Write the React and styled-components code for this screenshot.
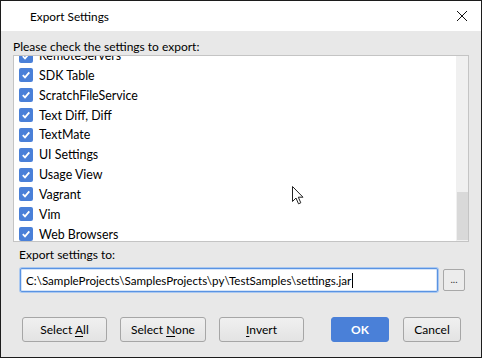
import React from 'react';
import styled, { createGlobalStyle } from 'styled-components';

const GlobalStyle = createGlobalStyle`
  html, body {
    margin: 0;
    padding: 0;
    background: #ffffff;
  }
  body {
    font-family: Lato, "Noto Sans", sans-serif;
    font-size: 12px;
    color: #000;
  }
`;

const Window = styled.div`
  position: relative;
  box-sizing: border-box;
  width: 482px;
  height: 358px;
  border: 1px solid #1c1c1c;
  display: flex;
  flex-direction: column;
  overflow: hidden;
`;

const TitleBar = styled.div`
  height: 30px;
  background: #ffffff;
  display: flex;
  align-items: center;
  justify-content: space-between;
  padding: 0 13px 0 29px;
`;

const Title = styled.span`
  font-size: 11.8px;
  color: #000;
`;

const CloseButton = styled.div`
  width: 12px;
  height: 12px;
  display: flex;
  align-items: center;
  justify-content: center;
`;

const Body = styled.div`
  flex: 1;
  background: #e8e8e8;
  display: flex;
  flex-direction: column;
  padding: 8px 12px 0 12px;
`;

const Label = styled.div`
  height: 16px;
  line-height: 16px;
  font-size: 12px;
`;

const ListBox = styled.div`
  box-sizing: border-box;
  width: 456px;
  height: 187px;
  border: 1px solid #c4c4c4;
  background: #ffffff;
  display: flex;
`;

const ListViewport = styled.div`
  flex: 1;
  overflow: hidden;
`;

const ListInner = styled.div`
  margin-top: -10.4px;
  padding-left: 5px;
`;

const Row = styled.div`
  height: 19.85px;
  display: flex;
  align-items: center;
  gap: 6px;
  font-size: 12.4px;
`;

const CheckBox = styled.span`
  width: 14px;
  height: 14px;
  border-radius: 2px;
  background: #4a80d8;
  display: flex;
  align-items: center;
  justify-content: center;
  flex-shrink: 0;
`;

const ScrollTrack = styled.div`
  width: 12px;
  background: #f0f0f0;
  display: flex;
  flex-direction: column;
  justify-content: flex-end;
  padding: 0 0 1px 1px;
  box-sizing: border-box;
`;

const ScrollThumb = styled.div`
  height: 48px;
  background: #d9d9d9;
`;

const ExportSection = styled.div`
  padding-left: 6px;
  margin-top: 5px;
  display: flex;
  flex-direction: column;
  gap: 5px;
`;

const PathRow = styled.div`
  display: flex;
  align-items: center;
  gap: 5px;
  margin-left: 1px;
`;

const PathField = styled.div`
  box-sizing: border-box;
  width: 418px;
  height: 24px;
  border: 1px solid #5a93e2;
  box-shadow: 0 0 0 1px #aac8f0, inset 0 0 0 1px #d5e4f8;
  border-radius: 2px;
  background: #ffffff;
  display: flex;
  align-items: center;
  padding-left: 5px;
  white-space: nowrap;
  font-size: 11.6px;
`;

const Caret = styled.span`
  display: inline-block;
  width: 1px;
  height: 15px;
  margin-left: 1px;
  background: #000;
`;

const BrowseButton = styled.div`
  box-sizing: border-box;
  width: 22px;
  height: 22px;
  border: 1px solid #a8a8a8;
  border-radius: 2px;
  background: #ececec;
  font-size: 10px;
  display: flex;
  align-items: center;
  justify-content: center;
  color: #333;
  padding-bottom: 3px;
`;

const ButtonBar = styled.div`
  margin: 25px -12px 0 -12px;
  padding: 0 20px 0 21px;
  display: flex;
  justify-content: space-between;
`;

const ButtonGroup = styled.div`
  display: flex;
  gap: ${p => p.gap}px;
`;

const Button = styled.div`
  box-sizing: border-box;
  width: ${p => p.width}px;
  height: 25px;
  border-radius: 3px;
  border: 1px solid ${p => (p.primary ? '#4a80d8' : '#a6a6a6')};
  background: ${p => (p.primary ? '#4a80d8' : 'linear-gradient(#f0f0f0, #e3e3e3)')};
  color: ${p => (p.primary ? '#ffffff' : '#000000')};
  font-weight: ${p => (p.primary ? 700 : 400)};
  display: flex;
  align-items: center;
  justify-content: center;
  font-size: 12px;
`;

const Mnemonic = styled.span`
  text-decoration: underline;
  text-underline-offset: 2px;
`;

const Cursor = styled.svg`
  position: absolute;
  left: 291px;
  top: 185px;
`;

const settings = [
  'RemoteServers',
  'SDK Table',
  'ScratchFileService',
  'Text Diff, Diff',
  'TextMate',
  'UI Settings',
  'Usage View',
  'Vagrant',
  'Vim',
  'Web Browsers',
];

const Check = () => (
  <svg width="10" height="10" viewBox="0 0 10 10">
    <path d="M1.8 5.2 L4 7.4 L8.3 2.4" fill="none" stroke="#ffffff" strokeWidth="1.8" />
  </svg>
);

export default function App() {
  return (
    <>
      <GlobalStyle />
      <Window>
        <TitleBar>
          <Title>Export Settings</Title>
          <CloseButton>
            <svg width="12" height="12" viewBox="0 0 12 12">
              <path d="M1 1 L11 11 M11 1 L1 11" stroke="#111" strokeWidth="1" />
            </svg>
          </CloseButton>
        </TitleBar>
        <Body>
          <Label>Please check the settings to export:</Label>
          <ListBox>
            <ListViewport>
              <ListInner>
                {settings.map(name => (
                  <Row key={name}>
                    <CheckBox>
                      <Check />
                    </CheckBox>
                    {name}
                  </Row>
                ))}
              </ListInner>
            </ListViewport>
            <ScrollTrack>
              <ScrollThumb />
            </ScrollTrack>
          </ListBox>
          <ExportSection>
            <Label>Export settings to:</Label>
            <PathRow>
              <PathField>
                C:\SampleProjects\SamplesProjects\py\TestSamples\settings.jar
                <Caret />
              </PathField>
              <BrowseButton>...</BrowseButton>
            </PathRow>
          </ExportSection>
          <ButtonBar>
            <ButtonGroup gap={13}>
              <Button width={85}><span>Select <Mnemonic>A</Mnemonic>ll</span></Button>
              <Button width={86}><span>Select <Mnemonic>N</Mnemonic>one</span></Button>
              <Button width={85}><span><Mnemonic>I</Mnemonic>nvert</span></Button>
            </ButtonGroup>
            <ButtonGroup gap={14}>
              <Button width={58} primary>OK</Button>
              <Button width={58}>Cancel</Button>
            </ButtonGroup>
          </ButtonBar>
        </Body>
        <Cursor width="12" height="20" viewBox="0 0 12 20">
          <path d="M0.5 0.5 L0.5 15.5 L4 12 L6.5 17.8 L8.8 16.8 L6.3 11.2 L11 11.2 Z" fill="#ffffff" stroke="#222" strokeWidth="1" strokeLinejoin="round" />
        </Cursor>
      </Window>
    </>
  );
}
